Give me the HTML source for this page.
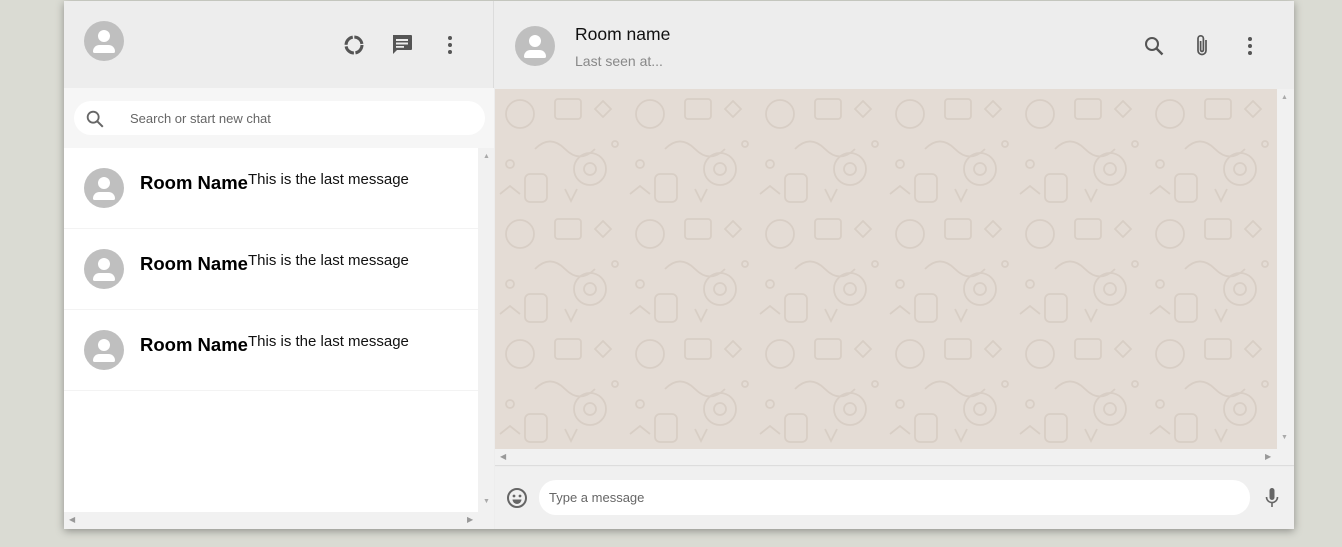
<!DOCTYPE html>
<html><head><meta charset="utf-8"><style>
*{box-sizing:border-box;margin:0;padding:0}
body{width:1342px;height:547px;background:#dadbd3;font-family:"Liberation Sans",sans-serif;position:relative;overflow:hidden}
.app{position:absolute;left:64px;top:1px;width:1230px;height:528px;background:#ededed;box-shadow:0 2px 8px rgba(0,0,0,.35)}
.abs{position:absolute}
.av{position:absolute;width:40px;height:40px;border-radius:50%;background:#bfbfbf;overflow:hidden}
.av:before{content:"";position:absolute;left:14px;top:9px;width:12px;height:12px;border-radius:50%;background:#fff}
.av:after{content:"";position:absolute;left:9px;top:24px;width:22px;height:8px;border-radius:8px 8px 2px 2px;background:#fff}
.row{position:absolute;left:0;width:414px;height:81px;border-bottom:1px solid #f3f3f3;background:#fff}
.row .name{position:absolute;left:76px;top:24px;font-size:18.5px;font-weight:bold;color:#000}
.row .msg{position:absolute;left:184px;top:23px;font-size:15px;color:#111}
svg{position:absolute}
</style></head><body>
<div class="app">
 <div class="abs" style="left:0;top:0;width:430px;height:87px;background:#ededed;border-right:1px solid #dcdcdc"></div>
 <div class="av" style="left:20px;top:20px"></div>
 <svg style="left:278px;top:32px" width="24" height="24" viewBox="0 0 24 24"><circle cx="12" cy="12" r="8" fill="none" stroke="#555" stroke-width="3" stroke-dasharray="11 1.6"/></svg>
 <svg style="left:326px;top:32px" width="24" height="24" viewBox="0 0 24 24"><path fill="#555" d="M3 2h18a1 1 0 0 1 1 1v13a1 1 0 0 1-1 1H7l-4 4z"/><path fill="#ededed" d="M6 6h12v2H6zM6 9.5h12v2H6zM6 13h8v1.8H6z"/></svg>
 <svg style="left:374px;top:32px" width="24" height="24" viewBox="0 0 24 24"><circle cx="12" cy="5" r="2" fill="#555"/><circle cx="12" cy="12" r="2" fill="#555"/><circle cx="12" cy="19" r="2" fill="#555"/></svg>
 <div class="abs" style="left:0;top:87px;width:430px;height:60px;background:#f6f6f6"></div>
 <div class="abs" style="left:10px;top:100px;width:411px;height:34px;border-radius:17px;background:#fff"></div>
 <svg style="left:20px;top:107px" width="22" height="22" viewBox="0 0 24 24"><circle cx="10" cy="10" r="6" fill="none" stroke="#666" stroke-width="2"/><path d="M14.5 14.5l6 6" stroke="#666" stroke-width="2.2"/></svg>
 <div class="abs" style="left:66px;top:110px;font-size:13px;color:#666">Search or start new chat</div>
 <div class="abs" style="left:0;top:147px;width:414px;height:364px;background:#fff"></div>
 <div class="row" style="top:147px"><div class="av" style="left:20px;top:20px"></div><div class="name">Room Name</div><div class="msg">This is the last message</div></div>
 <div class="row" style="top:228px"><div class="av" style="left:20px;top:20px"></div><div class="name">Room Name</div><div class="msg">This is the last message</div></div>
 <div class="row" style="top:309px"><div class="av" style="left:20px;top:20px"></div><div class="name">Room Name</div><div class="msg">This is the last message</div></div>
 <div class="abs" style="left:414px;top:147px;width:16px;height:364px;background:#f1f1f1"></div>
 <div class="abs" style="left:0;top:511px;width:430px;height:17px;background:#f1f1f1"></div>
 <div class="abs" style="left:419px;top:152px;font-size:7px;color:#aaa">▲</div>
 <div class="abs" style="left:419px;top:497px;font-size:7px;color:#aaa">▼</div>
 <div class="abs" style="left:5px;top:514px;font-size:8px;color:#999">◀</div>
 <div class="abs" style="left:403px;top:514px;font-size:8px;color:#999">▶</div>
 <div class="abs" style="left:431px;top:0;width:799px;height:88px;background:#ededed"></div>
 <div class="av" style="left:451px;top:25px"></div>
 <div class="abs" style="left:511px;top:23px;font-size:17.5px;color:#111">Room name</div>
 <div class="abs" style="left:511px;top:52px;font-size:14px;color:#888">Last seen at...</div>
 <svg style="left:1078px;top:33px" width="24" height="24" viewBox="0 0 24 24"><circle cx="10" cy="10" r="6" fill="none" stroke="#555" stroke-width="2"/><path d="M14.5 14.5l6 6" stroke="#555" stroke-width="2.4"/></svg>
 <svg style="left:1126px;top:33px" width="24" height="24" viewBox="0 0 24 24"><path d="M16 6v10.5a4 4 0 0 1-8 0V4.5a2.7 2.7 0 0 1 5.4 0V16a1.4 1.4 0 0 1-2.8 0V7" fill="none" stroke="#555" stroke-width="1.7"/></svg>
 <svg style="left:1174px;top:33px" width="24" height="24" viewBox="0 0 24 24"><circle cx="12" cy="5" r="2" fill="#555"/><circle cx="12" cy="12" r="2" fill="#555"/><circle cx="12" cy="19" r="2" fill="#555"/></svg>
 <div class="abs" style="left:431px;top:88px;width:782px;height:360px;background:#e4dcd5"></div>
 <svg style="left:431px;top:88px" width="782" height="360">
  <defs><pattern id="p" width="130" height="120" patternUnits="userSpaceOnUse"><g fill="none" stroke="#d8cec5" stroke-width="1.8">
   <circle cx="25" cy="25" r="14"/><rect x="60" y="10" width="26" height="20" rx="3"/><path d="M100 20l8 -8 8 8 -8 8z"/><circle cx="15" cy="75" r="4"/><path d="M40 60q15 -15 30 0t30 0"/><rect x="30" y="85" width="22" height="28" rx="5"/><circle cx="95" cy="80" r="16"/><circle cx="95" cy="80" r="6"/><path d="M70 100l6 12 6 -12"/><circle cx="120" cy="55" r="3"/><path d="M5 105l10 -8 10 8"/>
  </g></pattern></defs>
  <rect width="782" height="360" fill="url(#p)"/>
 </svg>
 <div class="abs" style="left:1213px;top:88px;width:17px;height:360px;background:#f1f1f1"></div>
 <div class="abs" style="left:431px;top:448px;width:799px;height:17px;background:#f1f1f1;border-bottom:1px solid #ddd"></div>
 <div class="abs" style="left:1217px;top:93px;font-size:7px;color:#aaa">▲</div>
 <div class="abs" style="left:1217px;top:433px;font-size:7px;color:#aaa">▼</div>
 <div class="abs" style="left:436px;top:451px;font-size:8px;color:#999">◀</div>
 <div class="abs" style="left:1201px;top:451px;font-size:8px;color:#999">▶</div>
 <div class="abs" style="left:431px;top:466px;width:799px;height:62px;background:#f0f0f0"></div>
 <svg style="left:441px;top:485px" width="24" height="24" viewBox="0 0 24 24"><circle cx="12" cy="12" r="9" fill="none" stroke="#666" stroke-width="2"/><circle cx="9" cy="10" r="1.4" fill="#666"/><circle cx="15" cy="10" r="1.4" fill="#666"/><path d="M7.5 13.5h9a4.5 4.5 0 0 1-9 0z" fill="#666"/></svg>
 <div class="abs" style="left:475px;top:479px;width:711px;height:35px;border-radius:17px;background:#fff"></div>
 <div class="abs" style="left:485px;top:489px;font-size:13px;color:#666">Type a message</div>
 <svg style="left:1196px;top:485px" width="24" height="24" viewBox="0 0 24 24"><rect x="9.5" y="2" width="5" height="12" rx="2.5" fill="#666"/><path d="M6.5 11a5.5 5.5 0 0 0 11 0M12 16.5V21" fill="none" stroke="#666" stroke-width="1.6"/></svg>
</div>
</body></html>
